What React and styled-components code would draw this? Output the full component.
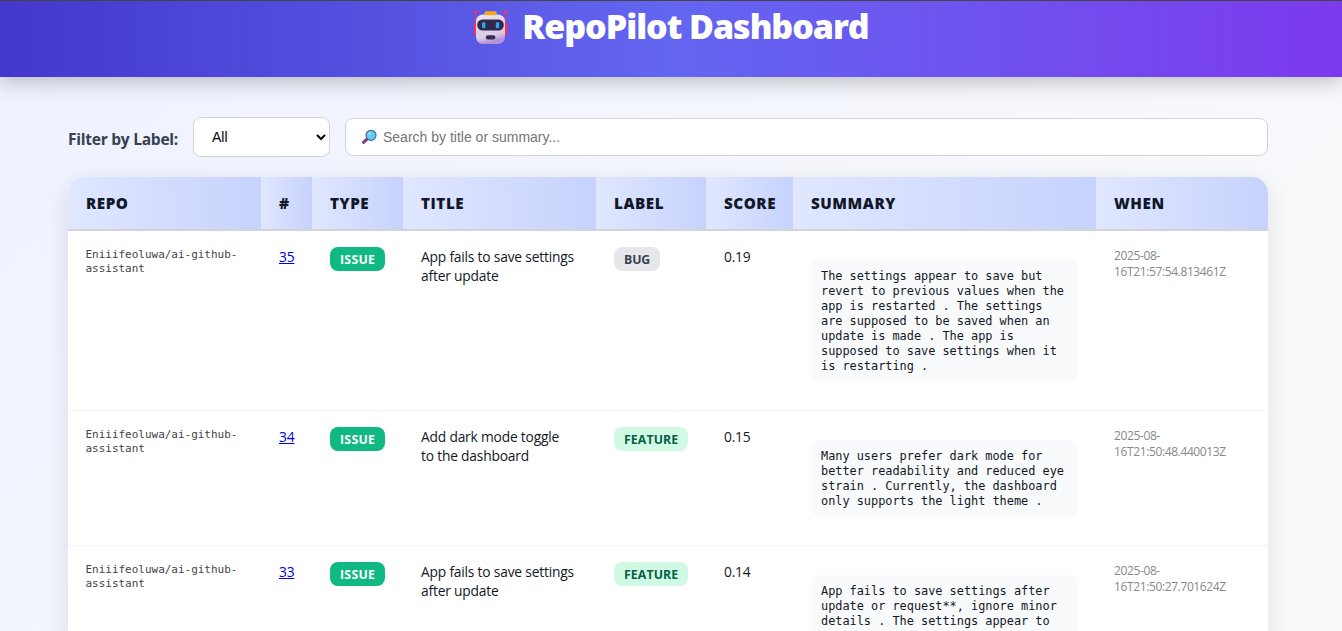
import React from "react";
import styled, { createGlobalStyle } from "styled-components";

const Global = createGlobalStyle`
  * { box-sizing: border-box; }
  html, body { margin: 0; height: 100%; overflow: hidden; }
  body { font-family: "Open Sans", "Noto Sans", sans-serif; color: #111827; }
`;
const Page = styled.div`
  height: 631px; overflow: hidden;
  background: linear-gradient(135deg, #eef2ff, #f9fafb 85%, #fbf9fa);
`;
const Header = styled.header`
  height: 77px; border-top: 1px solid #444;
  background: linear-gradient(90deg, #4338ca, #6366f1 50%, #7c3aed);
  box-shadow: 0 4px 20px rgba(0, 0, 0, 0.25);
  display: flex; justify-content: center; align-items: flex-start; gap: 12px;
  padding: 4px 1px 0 0;
`;
const Heading = styled.h1`
  margin: 0; color: #fff; font-size: 34px; line-height: 42px; font-weight: 800;
  letter-spacing: -1.05px; white-space: nowrap;
`;
const RobotIcon = styled.svg`width: 38px; height: 38px; margin-top: 3px; flex: none;`;
const Content = styled.main`padding: 40px 74px 0 68px;`;
const Filters = styled.div`display: flex; align-items: center; height: 40px; margin-bottom: 20px;`;
const FilterLabel = styled.label`
  width: 125px; font-size: 15.6px; letter-spacing: -0.28px; font-weight: 700; color: #374151;
  white-space: nowrap; padding-top: 3px;
`;
const Select = styled.select`
  width: 137px; height: 40px; border: 1px solid #d1d5db; border-radius: 8px; background: #fff;
  padding: 0 0 0 14px; font: 14px "Liberation Sans", Arial, sans-serif; color: #000; margin-right: 15px;
`;
const SearchBox = styled.label`
  flex: 1; height: 38px; border: 1px solid #d1d5db; border-radius: 8px; background: #fff;
  display: flex; align-items: center; padding: 0 15px; gap: 5px;
`;
const SearchInput = styled.input`
  flex: 1; border: 0; outline: 0; padding: 0; background: none;
  font: 14px "Liberation Sans", Arial, sans-serif;
  &::placeholder { color: #757575; }
`;
const Card = styled.div`
  border-radius: 16px; overflow: hidden; background: #fff; box-shadow: 0 6px 24px rgba(0, 0, 0, 0.1);
`;
const Table = styled.table`
  width: 1200px; table-layout: fixed; border-collapse: separate; border-spacing: 0;
`;
const Th = styled.th`
  height: 54px; padding: 0 18px; text-align: left; font-size: 15.2px; font-weight: 800;
  letter-spacing: 0.55px; border-bottom: 2px solid #d1d5db; white-space: nowrap;
  background: linear-gradient(90deg, #e0e7ff, #c7d2fe);
`;
const Td = styled.td`
  padding: 16px 18px; vertical-align: top; font-size: 13.8px; line-height: 19px;
  letter-spacing: -0.2px; border-bottom: 1px solid #f3f4f6;
`;
const Repo = styled.div`
  font: 11px/14px "DejaVu Sans Mono", monospace; letter-spacing: -0.02px; color: #444; white-space: nowrap;
  margin: 1px 0 0 -0.5px;
`;
const NumberLink = styled.a`color: #0000ee; text-decoration: underline;`;
const Badge = styled.span`
  display: flex; width: fit-content; align-items: center; height: 24px; border-radius: 8px;
  padding: 0 10px;
  font-size: 12.3px; font-weight: 700; letter-spacing: ${(p) => p.$tracking || "0.3px"};
  color: ${(p) => p.$fg}; background: ${(p) => p.$bg};
`;
const Summary = styled.pre`
  margin: 13px 0; padding: 9px 10px 7px; border-radius: 8px; background: #f9fafb;
  font: 11.9px/15px "DejaVu Sans Mono", monospace; letter-spacing: -0.014px; color: #111827;
`;
const When = styled.div`
  margin-top: 1px; font-size: 12px; line-height: 16px; letter-spacing: -0.38px; color: #888;
`;

const tones = {
  ISSUE: { $bg: "#10b981", $fg: "#fff" },
  BUG: { $bg: "#e5e7eb", $fg: "#374151", $tracking: "-0.1px" },
  FEATURE: { $bg: "#d1fae5", $fg: "#065f46", $tracking: "0.1px" },
};
const columns = [
  ["REPO", 193], ["#", 51], ["TYPE", 91], ["TITLE", 193],
  ["LABEL", 110], ["SCORE", 87], ["SUMMARY", 303], ["WHEN", 172],
];
const rows = [
  { id: 35, title: ["App fails to save settings", "after update"], label: "BUG", score: "0.19", time: "16T21:57:54.813461Z",
    summary: "The settings appear to save but\nrevert to previous values when the\napp is restarted . The settings\nare supposed to be saved when an\nupdate is made . The app is\nsupposed to save settings when it\nis restarting ." },
  { id: 34, title: ["Add dark mode toggle", "to the dashboard"], label: "FEATURE", score: "0.15", time: "16T21:50:48.440013Z",
    summary: "Many users prefer dark mode for\nbetter readability and reduced eye\nstrain . Currently, the dashboard\nonly supports the light theme ." },
  { id: 33, title: ["App fails to save settings", "after update"], label: "FEATURE", score: "0.14", time: "16T21:50:27.701624Z",
    summary: "App fails to save settings after\nupdate or request**, ignore minor\ndetails . The settings appear to" },
];

function Robot() {
  return (
    <RobotIcon viewBox="0 0 38 38">
      <defs>
        <linearGradient id="face" x1="0" y1="0" x2="0.25" y2="1">
          <stop offset="0" stopColor="#eee4ef" /><stop offset="0.8" stopColor="#d9cbe4" /><stop offset="1" stopColor="#b592d8" />
        </linearGradient>
      </defs>
      <path d="M3.6 4v12M33.5 4v12" stroke="#d93a78" strokeWidth="1.2" />
      <circle cx="3.6" cy="4.2" r="1.8" fill="#f8315f" /><circle cx="33.5" cy="4.2" r="1.8" fill="#f8315f" />
      <rect x="1.7" y="14.5" width="5" height="13" rx="2.4" fill="#f8315f" />
      <rect x="30.5" y="14.5" width="5" height="13" rx="2.4" fill="#f8315f" />
      <rect x="4" y="6.5" width="29" height="29.5" rx="7" fill="url(#face)" />
      <rect x="12.3" y="3.2" width="12.4" height="4" rx="1.8" fill="#f6a91b" />
      <rect x="5.2" y="11.5" width="26.6" height="11" rx="5.3" fill="#32284b" />
      <rect x="10" y="14.3" width="3.4" height="6" rx="1.2" fill="#26a9ee" />
      <rect x="23.8" y="14.3" width="3.4" height="6" rx="1.2" fill="#26a9ee" />
      <rect x="13.8" y="27.2" width="9.6" height="4.2" rx="2" fill="#372b52" />
    </RobotIcon>
  );
}
function Magnifier() {
  return (
    <svg width="17" height="16" viewBox="0 0 17 16">
      <path d="M2.6 13.2 6.6 9.6" stroke="#7d4588" strokeWidth="3.2" strokeLinecap="round" />
      <circle cx="10" cy="6.3" r="5" fill="#5fcdf0" stroke="#50659c" strokeWidth="1.2" />
      <circle cx="8.6" cy="4.6" r="1.2" fill="#a5e6fa" />
    </svg>
  );
}

export default function App() {
  return (
    <Page>
      <Global />
      <Header><Robot /><Heading>RepoPilot Dashboard</Heading></Header>
      <Content>
        <Filters>
          <FilterLabel htmlFor="label">Filter by Label:</FilterLabel>
          <Select id="label"><option>All</option></Select>
          <SearchBox><Magnifier /><SearchInput placeholder="Search by title or summary..." /></SearchBox>
        </Filters>
        <Card>
          <Table>
            <colgroup>{columns.map(([n, w]) => <col key={n} width={w} />)}</colgroup>
            <thead><tr>{columns.map(([n]) => <Th key={n}>{n}</Th>)}</tr></thead>
            <tbody>
              {rows.map((r) => (
                <tr key={r.id}>
                  <Td><Repo>Eniiifeoluwa/ai-github-<br />assistant</Repo></Td>
                  <Td><NumberLink href="#">{r.id}</NumberLink></Td>
                  <Td><Badge {...tones.ISSUE}>ISSUE</Badge></Td>
                  <Td>{r.title[0]}<br />{r.title[1]}</Td>
                  <Td><Badge {...tones[r.label]}>{r.label}</Badge></Td>
                  <Td>{r.score}</Td>
                  <Td><Summary>{r.summary}</Summary></Td>
                  <Td><When>2025-08-<br />{r.time}</When></Td>
                </tr>
              ))}
            </tbody>
          </Table>
        </Card>
      </Content>
    </Page>
  );
}
